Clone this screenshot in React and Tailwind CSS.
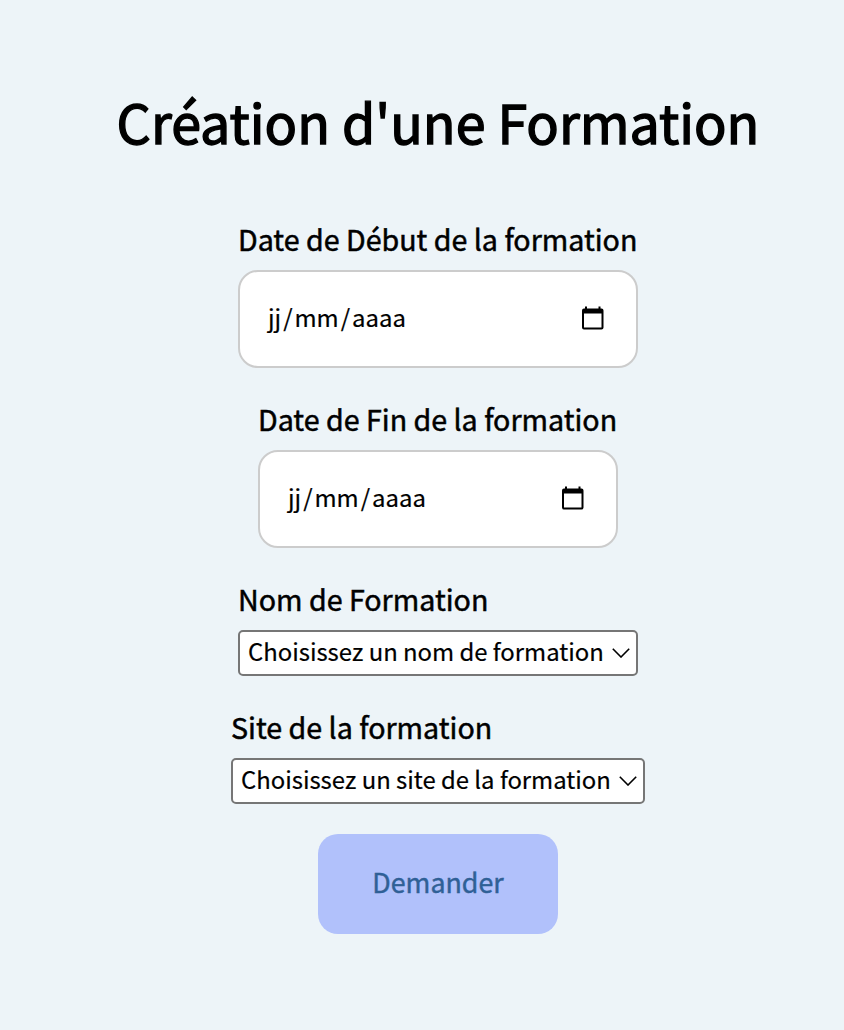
function CalendarIcon() {
  return (
    <svg className="mb-[3px] h-6 w-[22px] shrink-0" viewBox="0 0 22 24" fill="black" aria-hidden="true">
      <path fillRule="evenodd" d="M3 0.500h2v2h11.500v-2h2v2H19.500q2 0 2 2V21.500q0 2-2 2H2q-2 0-2-2V4.500q0-2 2-2h1zM2 7.500v14h17.500V7.500z" />
    </svg>
  );
}

function Chevron() {
  return (
    <svg className="h-[10px] w-[18px] shrink-0" viewBox="0 0 18 10" fill="none" stroke="black" strokeWidth="1.6" aria-hidden="true">
      <path d="M0.800 0.800l8.200 8.200 8.200-8.200" />
    </svg>
  );
}

function Label({ children }) {
  return <span className="block h-[40px] whitespace-nowrap text-[28.620px] leading-[38px] [-webkit-text-stroke:0.5px_currentColor]">{children}</span>;
}

function DateField({ label, className }) {
  return (
    <div className={`flex flex-col gap-[10px] ${className}`}>
      <Label>{label}</Label>
      <div role="textbox" aria-label={label} className="flex h-[98px] items-center justify-between rounded-[20px] border-2 border-[#ccc] bg-white pr-[32px] pl-[28px]">
        <span className="mb-[4px] flex text-[23.880px] leading-[40px] [-webkit-text-stroke:0.2px_currentColor]">
          <span>jj</span><span className="px-[2px]">/</span><span>mm</span><span className="px-[2px]">/</span><span>aaaa</span>
        </span>
        <CalendarIcon />
      </div>
    </div>
  );
}

function SelectField({ label, value, className }) {
  return (
    <div className={`flex flex-col gap-[10px] ${className}`}>
      <Label>{label}</Label>
      <button type="button" className="flex h-[46px] items-center justify-between rounded-[5px] border-2 border-[#767676] bg-white pr-[6px] pl-[8px]">
        <span className="pb-[4px] text-[23.860px] leading-[38px] whitespace-nowrap [-webkit-text-stroke:0.2px_currentColor]">{value}</span>
        <Chevron />
      </button>
    </div>
  );
}

export default function App() {
  return (
    <main className="flex h-[1030px] w-[844px] flex-col items-center bg-[#edf4f8] pt-[80px] pl-[32px] font-['Noto_Sans_CJK_SC',sans-serif] text-black">
      <h1 className="h-[80px] text-[53.750px] leading-[81px] font-normal whitespace-nowrap [-webkit-text-stroke:1.4px_currentColor]">Création d'une Formation</h1>
      <form className="mt-[60px] flex flex-col items-center gap-8">
        <DateField label="Date de Début de la formation" className="w-[400px]" />
        <DateField label="Date de Fin de la formation" className="w-[360px]" />
        <SelectField label="Nom de Formation" value="Choisissez un nom de formation" className="w-[400px]" />
        <SelectField label="Site de la formation" value="Choisissez un site de la formation" className="w-[414px]" />
        <button type="button" className="-mt-[2px] h-[100px] w-[240px] rounded-[20px] bg-[#b1c1fb] pb-[5px] text-[26.800px] leading-[40px] text-[#2f6096] [-webkit-text-stroke:0.4px_currentColor]">Demander</button>
      </form>
    </main>
  );
}
